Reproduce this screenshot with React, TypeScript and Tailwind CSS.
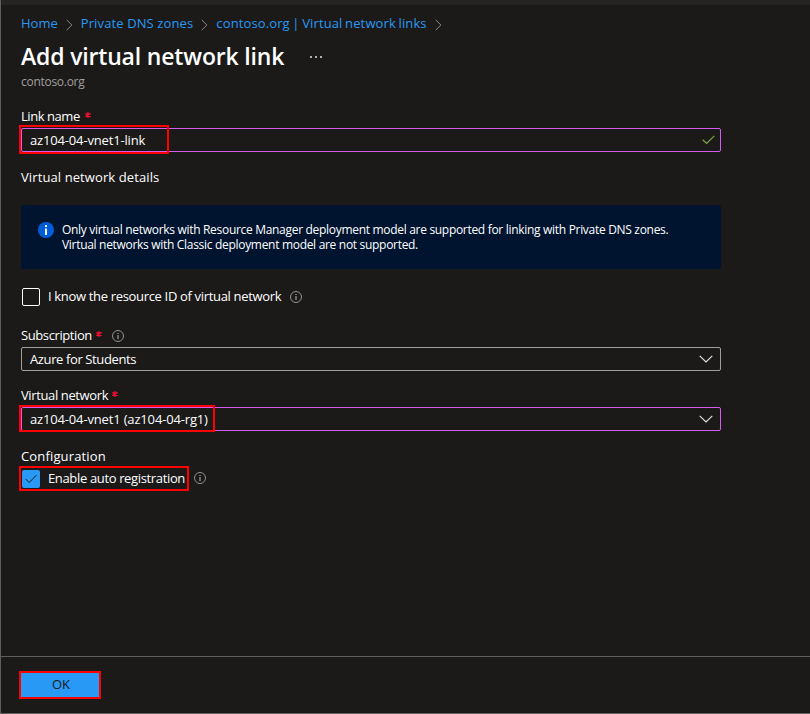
import React from 'react';

const Crumb = ({ children, className = '' }: { children: React.ReactNode; className?: string }) => (
  <a className={`whitespace-pre text-[#2899f5] ${className}`}>{children}</a>
);

const Sep = () => (
  <svg width="7" height="12" viewBox="0 0 7 12" className="mt-[2px] shrink-0" fill="none" stroke="#8a8886" strokeWidth="1">
    <path d="M0.7 0.9L5.9 6L0.7 11.1" />
  </svg>
);

const Info = ({ className = '' }: { className?: string }) => (
  <svg width="12" height="12" viewBox="0 0 12 12" className={`shrink-0 ${className}`} fill="none" stroke="#a19f9d">
    <circle cx="6" cy="6" r="5.5" strokeWidth="0.9" />
    <path d="M6 5v4M6 3v1" strokeWidth="1.2" />
  </svg>
);

const Star = ({ className = '' }: { className?: string }) => (
  <svg width="6" height="6" viewBox="0 0 6 6" className={`-mt-1 shrink-0 ${className}`} stroke="#f01030" strokeWidth="1.3">
    <path d="M3 0v6M0.3 1.4L5.7 4.6M5.7 1.4L0.3 4.6" />
  </svg>
);

const Chevron = () => (
  <svg width="14" height="8" viewBox="0 0 14 8" className="mr-[7px] ml-auto" fill="none" stroke="#e8e6e4" strokeWidth="1.1">
    <path d="M0.7 0.8L7 7L13.3 0.8" />
  </svg>
);

const Mark = ({ className }: { className: string }) => (
  <div className={`pointer-events-none absolute border-2 border-[#ff0000] ${className}`} />
);

export default function App() {
  return (
    <div className="flex h-[714px] w-[810px] flex-col overflow-hidden border-b border-l border-[#605e5c] bg-[#1b1a19] font-['Open_Sans','Noto_Sans',sans-serif] text-[13px] text-white">
      <div className="h-[5px] shrink-0 bg-[#252423]" />
      <div className="flex h-[651px] w-[720px] shrink-0 flex-col pl-5">
        <nav className="flex h-[37px] items-center">
          <Crumb>Home</Crumb>
          <span className="mx-2 flex"><Sep /></span>
          <Crumb className="tracking-[0.12px]">Private DNS zones</Crumb>
          <span className="mx-2 flex"><Sep /></span>
          <Crumb className="tracking-[0.12px] [word-spacing:-0.9px]">contoso.org | Virtual network links</Crumb>
          <span className="ml-2 flex"><Sep /></span>
        </nav>
        <div className="-mt-[2px] flex h-8 items-center">
          <h1 className="text-[23px] leading-8 font-semibold tracking-[-0.17px] whitespace-nowrap">Add virtual network link</h1>
          <svg width="12" height="2" viewBox="0 0 12 2" className="mt-[2px] ml-[26px]" fill="#b3b0ad">
            <path d="M0 0h2v2H0zM5 0h2v2H5zM10 0h2v2h-2z" />
          </svg>
        </div>
        <div className="mt-[2px] h-4 text-[12px] leading-4 tracking-[-0.28px] text-[#a19f9d]"><span>contoso.org</span></div>
        <label className="mt-4 flex h-[22px] items-center">
          <span className="tracking-[-0.45px]">Link name</span>
          <Star className="ml-[5px]" />
        </label>
        <div className="relative flex h-6 shrink-0 items-center rounded-[2px] border border-[#d65cf0] pl-2">
          <span className="mt-[2px] tracking-[-0.16px]">az104-04-vnet1-link</span>
          <svg width="13" height="10" viewBox="0 0 13 10" className="mr-[5px] ml-auto" fill="none" stroke="#7fa642" strokeWidth="1.2">
            <path d="M0.7 4.7L4.6 8.5L12.3 0.8" />
          </svg>
          <Mark className="-top-1 -left-[3px] h-[29px] w-[150px]" />
        </div>
        <h2 className="mt-4 h-[18px] leading-[18px] tracking-[0.1px]"><span>Virtual network details</span></h2>
        <div className="mt-[19px] flex h-16 shrink-0 rounded-[2px] bg-[#00142f] pt-[17px] pl-[17px]">
          <svg width="16" height="16" viewBox="0 0 16 16" className="shrink-0">
            <circle cx="8" cy="8" r="8" fill="#015cda" />
            <path d="M7 6.5h2V13H7zM7 3h2v2H7z" fill="#fff" />
          </svg>
          <p className="ml-2 text-[12px] leading-[15px] tracking-[-0.305px] whitespace-nowrap">
            Only virtual networks with Resource Manager deployment model are supported for linking with Private DNS zones.
            <br />
            Virtual networks with Classic deployment model are not supported.
          </p>
        </div>
        <div className="mt-[19px] flex h-[18px] items-center">
          <div className="ml-px h-[18px] w-[18px] rounded-[2px] border border-white" />
          <span className="ml-2 tracking-[-0.33px]">I know the resource ID of virtual network</span>
          <Info className="ml-[9px]" />
        </div>
        <label className="mt-[19px] flex h-[22px] items-center">
          <span className="tracking-[-0.4px]">Subscription</span>
          <Star className="ml-1" />
          <Info className="ml-[10px]" />
        </label>
        <div className="flex h-6 shrink-0 items-center rounded-[2px] border border-[#a19f9d] pl-2">
          <span className="mt-[2px] tracking-[-0.38px]">Azure for Students</span>
          <Chevron />
        </div>
        <label className="mt-[14px] flex h-[22px] items-center">
          <span className="tracking-[-0.38px]">Virtual network</span>
          <Star className="ml-1" />
        </label>
        <div className="relative flex h-6 shrink-0 items-center rounded-[2px] border border-[#d65cf0] pl-2">
          <span className="mt-[2px] tracking-[-0.16px]">az104-04-vnet1 (az104-04-rg1)</span>
          <Chevron />
          <Mark className="-top-[3px] -left-[3px] h-[27px] w-[196px]" />
        </div>
        <h2 className="mt-4 h-[18px] leading-[18px] tracking-[0.15px]"><span>Configuration</span></h2>
        <div className="relative mt-[5px] flex h-[18px] items-center">
          <div className="ml-px flex h-[18px] w-[18px] items-center justify-center rounded-[2px] bg-[#2899f5]">
            <svg width="12" height="10" viewBox="0 0 12 10" fill="none" stroke="#1b1a19" strokeWidth="1">
              <path d="M0.7 5L4.2 8.5L11.4 1.2" />
            </svg>
          </div>
          <span className="ml-2 tracking-[-0.35px]">Enable auto registration</span>
          <Info className="-mt-[2px] ml-[9px]" />
          <Mark className="-top-1 -left-[2px] h-[25px] w-[170px]" />
        </div>
      </div>
      <footer className="h-[57px] border-t border-[#605e5c] pt-[14px] pl-[18px]">
        <button className="flex h-7 w-[82px] items-center justify-center border-2 border-[#ff0000] bg-[#2899f5] text-[#1b1a19]">
          <span className="ml-[2px]">OK</span>
        </button>
      </footer>
    </div>
  );
}
